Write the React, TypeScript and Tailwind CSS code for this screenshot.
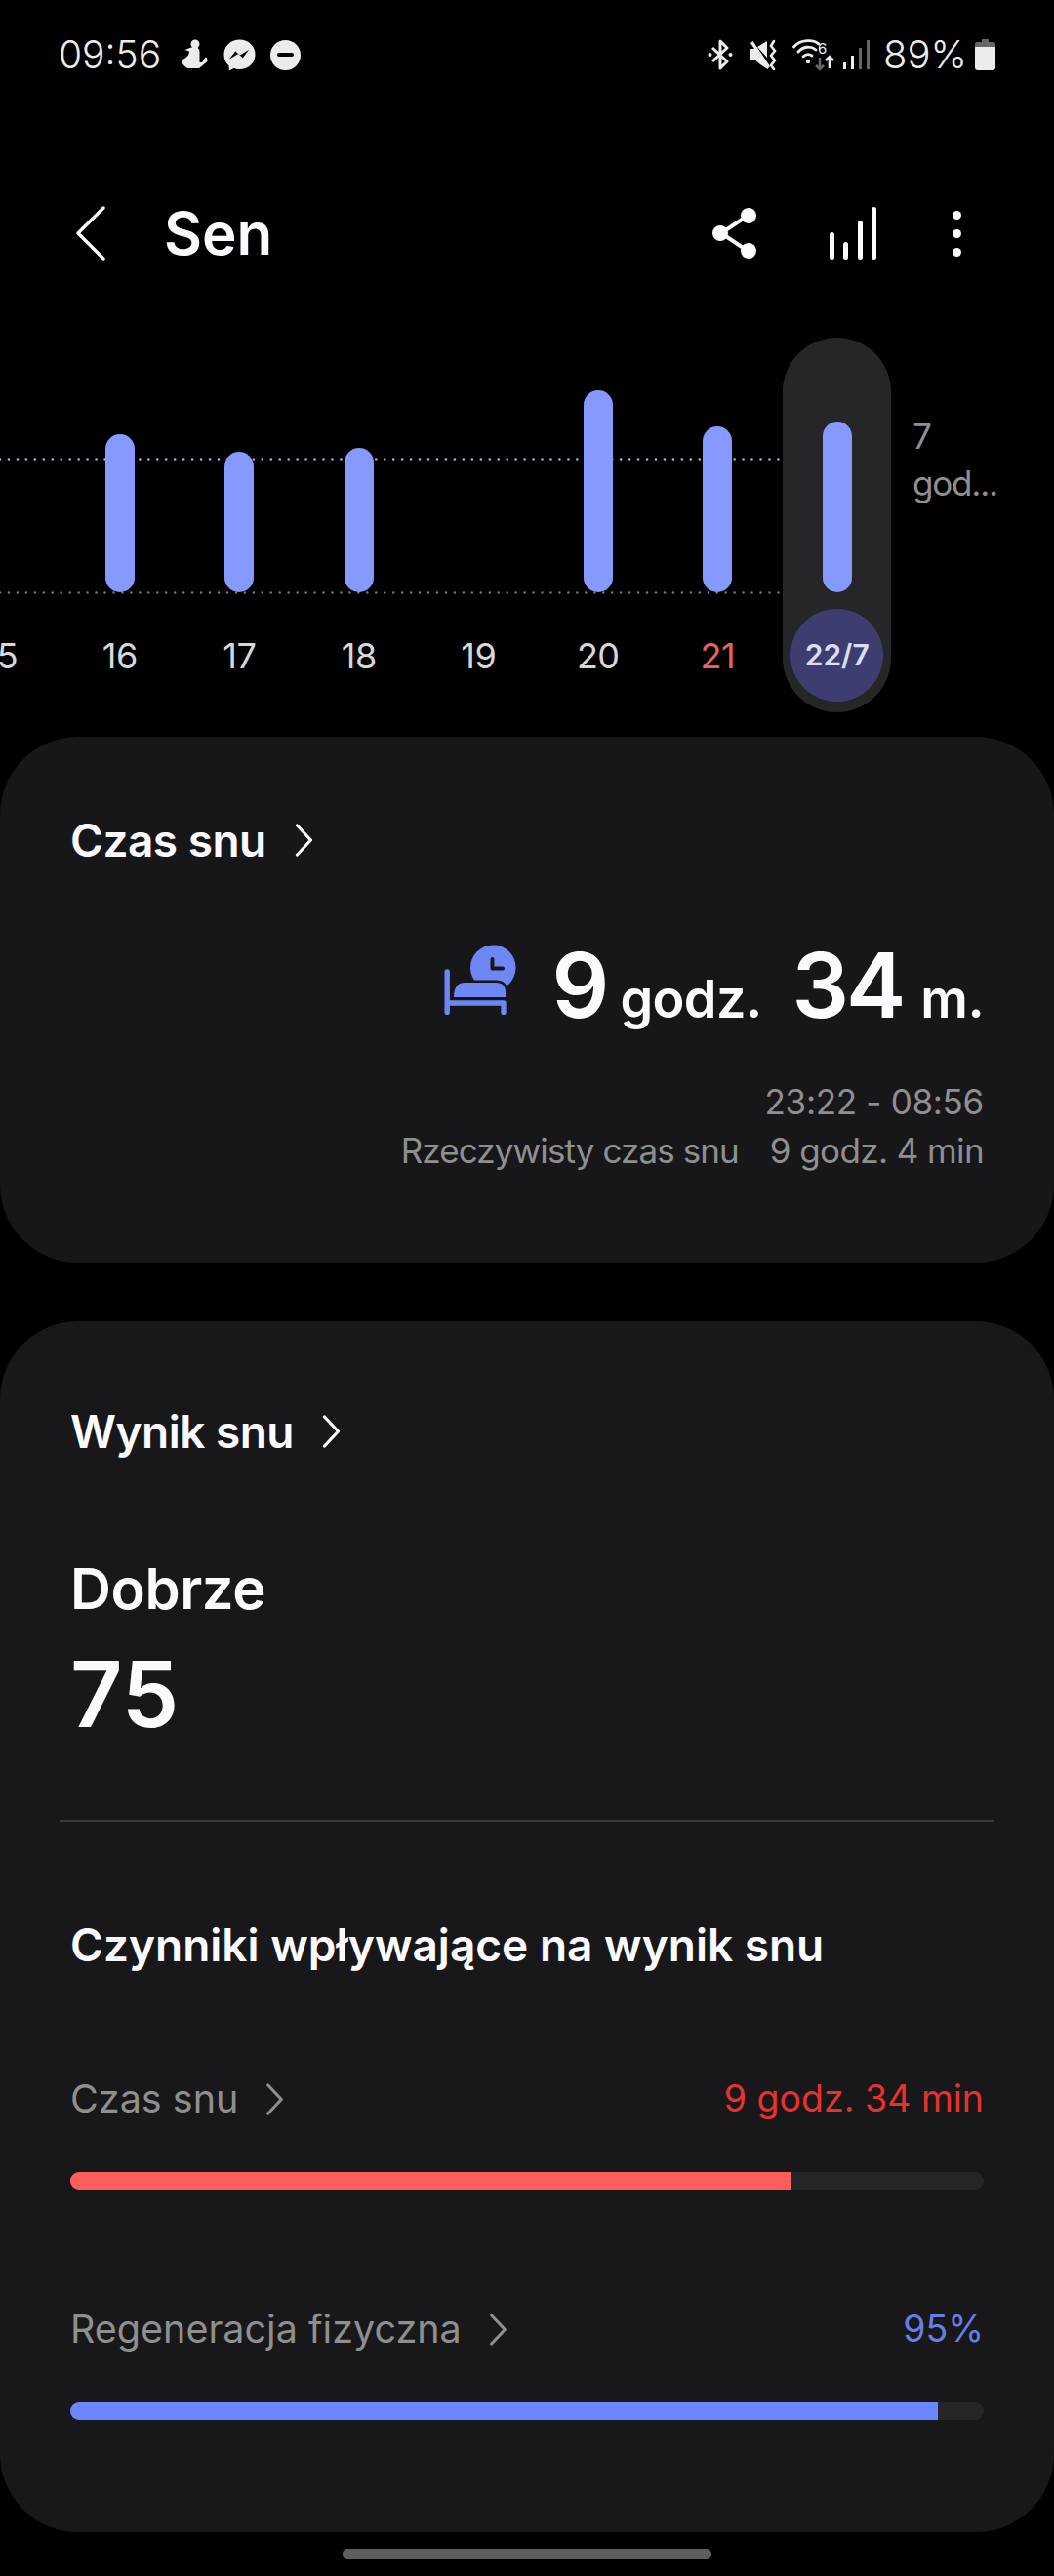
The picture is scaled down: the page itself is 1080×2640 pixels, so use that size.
const BARS = [
  { label: '15', height: 0 },
  { label: '16', height: 162 },
  { label: '17', height: 144 },
  { label: '18', height: 148 },
  { label: '19', height: 0 },
  { label: '20', height: 207 },
  { label: '21', height: 170, red: true },
]

function Chevron({ className }: { className: string }) {
  return (
    <svg viewBox="0 0 18 34" fill="none" stroke="currentColor" strokeWidth="3.2" strokeLinecap="round" strokeLinejoin="round" className={className}>
      <polyline points="2,2 16,17 2,32" />
    </svg>
  )
}

function StatusLeftIcons() {
  return (
    <div className="flex items-center ml-[20px] text-[#ececec]">
      <svg viewBox="0 0 28 32" fill="currentColor" className="w-[28px] h-[32px]">
        <circle cx="15" cy="5" r="4.5" />
        <path d="M11 8.5 L4.5 11 L9 12.5 C9 15 8 17 5.5 19 L1 22 C1 25 3 27 7 30 L19 30 L27.5 23 L27 19 L25.5 18.5 L22 24 L19.5 24 L19.5 13 C19.5 10 18 8.5 15.5 8.5 Z" />
      </svg>
      <svg viewBox="0 0 34 34" className="w-[33px] h-[33px] ml-[16px]">
        <path fill="currentColor" d="M17 0.5 C7.5 0.5 0.5 7.4 0.5 16.4 C0.5 21.2 2.4 25.3 5.7 28 L6 33.5 L11 30.9 C12.9 31.6 14.9 32 17 32 C26.5 32 33.5 25.2 33.5 16.3 C33.5 7.4 26.5 0.5 17 0.5 Z" />
        <path fill="#000" d="M6 21.5 L12.5 13 L17.5 17 L27 11 L20.5 19.8 L15.5 15.8 Z" />
      </svg>
      <div className="w-[31px] h-[31px] ml-[15px] rounded-full bg-current flex items-center justify-center">
        <div className="w-[17px] h-[4px] bg-black rounded-full" />
      </div>
    </div>
  )
}

function StatusRightIcons() {
  return (
    <div className="flex items-center text-[#ececec]">
      {/* bluetooth */}
      <svg viewBox="0 0 26 32" fill="none" stroke="currentColor" strokeWidth="3" strokeLinejoin="round" className="w-[26px] h-[32px]">
        <path d="M5 9 L20 23 L13 30 L13 2 L20 9 L5 23" />
        <circle cx="2.5" cy="16" r="2" fill="currentColor" stroke="none" />
        <circle cx="23.5" cy="16" r="2" fill="currentColor" stroke="none" />
      </svg>
      {/* mute + vibrate */}
      <svg viewBox="0 0 30 32" className="w-[30px] h-[32px] ml-[16px]">
        <path fill="currentColor" d="M1 10 L6 10 L2 4 L4.5 2 L22 28 L19.5 31 L12 26 L6 21 L1 21 Z M9 8 L19 2 L19 19 Z" />
        <path fill="none" stroke="currentColor" strokeWidth="2.6" strokeLinecap="round" d="M26 2 L23 7 L27 12 L23 17 L27 22 L23 27 L26 31" />
      </svg>
      {/* wifi + arrows */}
      <svg viewBox="0 0 43 34" className="w-[43px] h-[34px] ml-[15px]">
        <g fill="none" stroke="currentColor" strokeWidth="2.8" strokeLinecap="round">
          <path d="M1.5 9 C8 1 22 1 27 6" />
          <path d="M6 14 C11 8 19 8 24 12" />
          <path d="M11 19 C14 16 17 16 20 18" />
        </g>
        <circle cx="16" cy="24" r="2.2" fill="currentColor" />
        <text x="26" y="16" fontSize="15" fontFamily="Inter, sans-serif" fill="currentColor">6</text>
        <path fill="none" stroke="#666" strokeWidth="2.6" d="M28 20 V32 M24 28 L28 32 L32 28" />
        <path fill="none" stroke="currentColor" strokeWidth="2.6" d="M38 31 V19 M34 23 L38 19 L42 23" />
      </svg>
      {/* signal */}
      <div className="flex items-end gap-[4.5px] ml-[9px] h-[30px]">
        <div className="w-[3.5px] h-[7px] bg-[#ececec]" />
        <div className="w-[3.5px] h-[14px] bg-[#ececec]" />
        <div className="w-[3.5px] h-[22px] bg-[#666666]" />
        <div className="w-[3.5px] h-[30px] bg-[#666666]" />
      </div>
    </div>
  )
}

function Battery() {
  return (
    <svg viewBox="0 0 21 32" className="w-[21px] h-[32px] ml-[8px]">
      <path fill="#666" d="M7 0 H14 V3 H19 A2 2 0 0 1 21 5 V8 H0 V5 A2 2 0 0 1 2 3 H7 Z" />
      <path fill="#ececec" d="M0 8 H21 V29 A3 3 0 0 1 18 32 H3 A3 3 0 0 1 0 29 Z" />
    </svg>
  )
}

function Column({ label, height, red }: { label: string; height: number; red?: boolean }) {
  return (
    <div className="w-[122.5px] shrink-0 flex flex-col items-center">
      <div className="h-[261px] flex items-end">
        {height > 0 && <div className="w-[30px] rounded-full bg-[#8599ff]" style={{ height }} />}
      </div>
      <span className={`mt-[43px] text-[36px] leading-[44px] tracking-[-0.5px] ${red ? 'text-[#e2655f]' : 'text-[#d8d8d8]'}`}>{label}</span>
    </div>
  )
}

function SleepChart() {
  return (
    <section className="relative h-[384px] mt-[79px] shrink-0 flex -ml-[61px]">
      {/* dotted guide lines */}
      <svg className="absolute left-[61px] top-0 w-[802px] h-[270px]" fill="none" strokeWidth="2.6" strokeLinecap="round" strokeDasharray="0 8.96">
        <line x1="0" y1="124.5" x2="802" y2="124.5" stroke="#a3aff0" />
        <line x1="0" y1="261.5" x2="802" y2="261.5" stroke="#777777" />
      </svg>
      <div className="relative flex">
        {BARS.map((bar) => (
          <Column key={bar.label} {...bar} />
        ))}
      </div>
      <div className="relative w-[122.5px] shrink-0 flex justify-center">
        <div className="w-[111px] h-[384px] rounded-full bg-[#262628] flex flex-col items-center">
          <div className="h-[261px] flex items-end">
            <div className="w-[30px] h-[175px] rounded-full bg-[#8599ff]" />
          </div>
          <div className="mt-[17px] w-[95px] h-[95px] rounded-full bg-[#3e3d70] flex items-center justify-center text-[30px] font-semibold text-[#dcdcf6]">
            22/7
          </div>
        </div>
      </div>
      <div className="relative ml-[16px] mt-[77px] w-[100px] text-[35px] leading-[48px] tracking-[-1.2px] text-[#8f8f8f]">
        <div>7</div>
        <div>god...</div>
      </div>
    </section>
  )
}

function CardTitle({ title }: { title: string }) {
  return (
    <div className="flex items-center text-[#fbfbff]">
      <span className="text-[46px] leading-[56px] font-semibold tracking-[-0.5px]">{title}</span>
      <Chevron className="w-[19px] h-[34px] ml-[29px]" />
    </div>
  )
}

function Factor({ label, value, percent, valueColor, barColor }: { label: string; value: string; percent: number; valueColor: string; barColor: string }) {
  return (
    <div>
      <div className="flex items-center justify-between h-[50px]">
        <div className="flex items-center text-[#8f8f8f]">
          <span className="text-[39.5px] leading-[50px]">{label}</span>
          <Chevron className="w-[19px] h-[33px] ml-[28px]" />
        </div>
        <span className={`text-[37.5px] leading-[50px] ${valueColor}`}>{value}</span>
      </div>
      <div className="mt-[50px] h-[18px] rounded-full bg-[#262628] overflow-hidden">
        <div className={`h-full ${barColor}`} style={{ width: `${percent}%` }} />
      </div>
    </div>
  )
}

export default function App() {
  return (
    <div className="w-[1080px] h-[2640px] bg-black overflow-hidden flex flex-col [font-family:Inter,sans-serif]">
      {/* status bar */}
      <div className="h-[72px] pt-[40px] pl-[60px] pr-[60px] flex items-center justify-between shrink-0">
        <div className="flex items-center">
          <span className="text-[39px] leading-[34px] text-[#ececec] font-light">09:56</span>
          <StatusLeftIcons />
        </div>
        <div className="flex items-center">
          <StatusRightIcons />
          <span className="ml-[14px] text-[40px] leading-[34px] text-[#ececec] font-light">89%</span>
          <Battery />
        </div>
      </div>

      {/* header */}
      <header className="h-[56px] mt-[139px] flex items-center shrink-0 text-[#fbfbff]">
        <svg viewBox="0 0 30 56" fill="none" stroke="currentColor" strokeWidth="3.4" strokeLinecap="round" strokeLinejoin="round" className="w-[30px] h-[56px] ml-[78px]">
          <polyline points="28,2 2,28 28,54" />
        </svg>
        <h1 className="ml-[60px] text-[60px] leading-[56px] font-semibold">Sen</h1>
        <div className="ml-auto flex items-center">
          <svg viewBox="0 0 46 52" className="w-[46px] h-[52px]">
            <path d="M36 8 L9 26 L36 44" fill="none" stroke="currentColor" strokeWidth="4" />
            <circle cx="37" cy="8" r="8" fill="currentColor" />
            <circle cx="8" cy="26" r="8" fill="currentColor" />
            <circle cx="37" cy="44" r="8" fill="currentColor" />
          </svg>
          <div className="ml-[74px] flex items-end gap-[9.5px] h-[54px]">
            <div className="w-[5px] h-[28px] rounded-full bg-current" />
            <div className="w-[5px] h-[18px] rounded-full bg-current" />
            <div className="w-[5px] h-[40px] rounded-full bg-current" />
            <div className="w-[5px] h-[54px] rounded-full bg-current" />
          </div>
          <div className="ml-[78px] mr-[95px] flex flex-col gap-[10px]">
            <div className="w-[9px] h-[9px] rounded-full bg-current" />
            <div className="w-[9px] h-[9px] rounded-full bg-current" />
            <div className="w-[9px] h-[9px] rounded-full bg-current" />
          </div>
        </div>
      </header>

      <SleepChart />

      {/* sleep time card */}
      <section className="mt-[25px] h-[539px] shrink-0 rounded-[80px] bg-[#17171a] pt-[78px] px-[72px]">
        <CardTitle title="Czas snu" />
        <div className="mt-[81px] flex items-baseline justify-end text-[#fbfbff] font-semibold">
          <svg viewBox="9 8 75 72" className="w-[75px] h-[72px] self-center mr-[36px] -translate-y-[13px]" fill="#6f87f5">
            <circle cx="59.3" cy="31.7" r="23.3" />
            <path fill="#17171a" stroke="#17171a" strokeWidth="5" d="M19 62 C19 52 23 47 30 47 L62 47 C69 47 72 51 72 57 L72 62 Z" />
            <path d="M19 62 C19 52 23 47 30 47 L62 47 C69 47 72 51 72 57 L72 62 Z" />
            <path fill="none" stroke="#17171a" strokeWidth="4" strokeLinecap="round" strokeLinejoin="round" d="M58.5 23 V32.5 H69" />
            <path fill="none" stroke="#6f87f5" strokeWidth="5.4" strokeLinecap="round" d="M12.2 36 V77.5" />
            <path fill="none" stroke="#6f87f5" strokeWidth="5.4" strokeLinecap="round" strokeLinejoin="round" d="M13 68 H70 V77.5" />
          </svg>
          <span className="text-[92px] leading-[80px] tracking-[-3px]">9</span>
          <span className="ml-[14px] text-[54px] leading-[80px] tracking-[-0.6px]">godz.</span>
          <span className="ml-[31px] text-[92px] leading-[80px] tracking-[-3px]">34</span>
          <span className="ml-[18px] text-[54px] leading-[80px] tracking-[-0.6px]">m.</span>
        </div>
        <div className="mt-[40px] text-right text-[35px] leading-[50px] text-[#8f8f8f]">
          <div className="tracking-[-0.3px]">23:22 - 08:56</div>
          <div className="flex justify-end gap-[32px]">
            <span className="tracking-[-0.9px]">Rzeczywisty czas snu</span>
            <span className="tracking-[-0.6px]">9 godz. 4 min</span>
          </div>
        </div>
      </section>

      {/* sleep score card */}
      <section className="mt-[60px] h-[1241px] shrink-0 rounded-[80px] bg-[#18181a] pt-[85px]">
        <div className="px-[72px]">
          <CardTitle title="Wynik snu" />
          <div className="mt-[98px] text-[58px] leading-[70px] font-semibold tracking-[-0.4px] text-[#fbfbff]">Dobrze</div>
          <div className="mt-[23px] text-[93px] leading-[100px] font-semibold text-[#fbfbff]">75</div>
        </div>
        <div className="mx-[61px] mt-[79px] h-[2px] bg-[#3a3a3c]" />
        <div className="px-[72px]">
          <h2 className="mt-[98px] text-[46px] leading-[56px] font-semibold text-[#fbfbff]">
            Czynniki wpływające na wynik snu
          </h2>
          <div className="mt-[105px] flex flex-col gap-[118px]">
            <Factor label="Czas snu" value="9 godz. 34 min" percent={79} valueColor="text-[#e5322f]" barColor="bg-[#ff5c5c]" />
            <Factor label="Regeneracja fizyczna" value="95%" percent={95} valueColor="text-[#667fe8]" barColor="bg-[#6c87fb]" />
          </div>
        </div>
      </section>

      {/* gesture bar */}
      <div className="mt-[17px] mx-auto w-[378px] h-[11px] rounded-[5px] bg-[#5e5e5e] shrink-0" />
    </div>
  )
}
